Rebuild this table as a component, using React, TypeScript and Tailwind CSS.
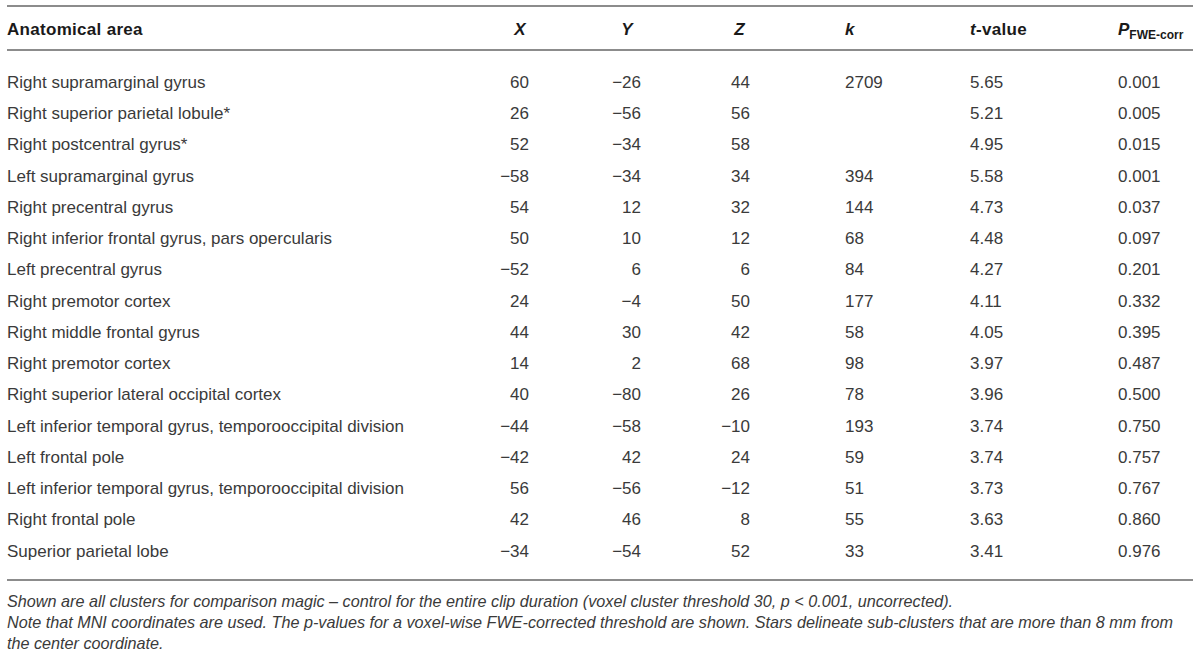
const rows: [string, string, string, string, string, string, string][] = [
  ['Right supramarginal gyrus', '60', '−26', '44', '2709', '5.65', '0.001'],
  ['Right superior parietal lobule*', '26', '−56', '56', '', '5.21', '0.005'],
  ['Right postcentral gyrus*', '52', '−34', '58', '', '4.95', '0.015'],
  ['Left supramarginal gyrus', '−58', '−34', '34', '394', '5.58', '0.001'],
  ['Right precentral gyrus', '54', '12', '32', '144', '4.73', '0.037'],
  ['Right inferior frontal gyrus, pars opercularis', '50', '10', '12', '68', '4.48', '0.097'],
  ['Left precentral gyrus', '−52', '6', '6', '84', '4.27', '0.201'],
  ['Right premotor cortex', '24', '−4', '50', '177', '4.11', '0.332'],
  ['Right middle frontal gyrus', '44', '30', '42', '58', '4.05', '0.395'],
  ['Right premotor cortex', '14', '2', '68', '98', '3.97', '0.487'],
  ['Right superior lateral occipital cortex', '40', '−80', '26', '78', '3.96', '0.500'],
  ['Left inferior temporal gyrus, temporooccipital division', '−44', '−58', '−10', '193', '3.74', '0.750'],
  ['Left frontal pole', '−42', '42', '24', '59', '3.74', '0.757'],
  ['Left inferior temporal gyrus, temporooccipital division', '56', '−56', '−12', '51', '3.73', '0.767'],
  ['Right frontal pole', '42', '46', '8', '55', '3.63', '0.860'],
  ['Superior parietal lobe', '−34', '−54', '52', '33', '3.41', '0.976'],
];

// area | X | Y | Z | k | t | P
const cols = 'grid grid-cols-[462px_60px_112px_109px_220px_148px_75px] items-center';

export default function App() {
  return (
    <div className="w-[1200px] h-[655px] bg-white px-[7px] pt-[5px] font-['Liberation_Sans',Arial,sans-serif] text-[#3a3a3a] overflow-hidden">
      {/* top rule */}
      <div className="border-t-2 border-[#8c8c8c]" />

      {/* header */}
      <div className={`${cols} h-[42px] pt-[3px] text-[17px] font-bold text-[#1a1a1a] tracking-[0.3px]`}>
        <div>Anatomical area</div>
        <div className="text-right italic pr-[3px]">X</div>
        <div className="text-right italic pr-[8px]">Y</div>
        <div className="text-right italic pr-[5px]">Z</div>
        <div className="pl-[95px] italic">k</div>
        <div>
          <span className="italic">t</span>-value
        </div>
        <div className="whitespace-nowrap tracking-normal">
          <span className="italic">P</span>
          <span className="text-[12px] relative top-[4px]">FWE-corr</span>
        </div>
      </div>
      <div className="border-t-2 border-[#8c8c8c]" />

      {/* body */}
      <div className="pt-[16px] pb-[12px] text-[17px]">
        {rows.map((r, i) => (
          <div key={i} className={`${cols} h-[31.25px]`}>
            <div>{r[0]}</div>
            <div className="text-right">{r[1]}</div>
            <div className="text-right">{r[2]}</div>
            <div className="text-right">{r[3]}</div>
            <div className="pl-[95px]">{r[4]}</div>
            <div>{r[5]}</div>
            <div>{r[6]}</div>
          </div>
        ))}
      </div>
      <div className="border-t-2 border-[#8c8c8c]" />

      {/* footnote */}
      <div className="pt-[10px] text-[16.2px] leading-[21px] italic">
        <p>
          Shown are all clusters for comparison magic – control for the entire clip duration (voxel cluster threshold 30, p &lt; 0.001, uncorrected).
        </p>
        <p>
          Note that MNI coordinates are used. The p-values for a voxel-wise FWE-corrected threshold are shown. Stars delineate sub-clusters that are more than 8 mm from the center coordinate.
        </p>
      </div>
    </div>
  );
}
